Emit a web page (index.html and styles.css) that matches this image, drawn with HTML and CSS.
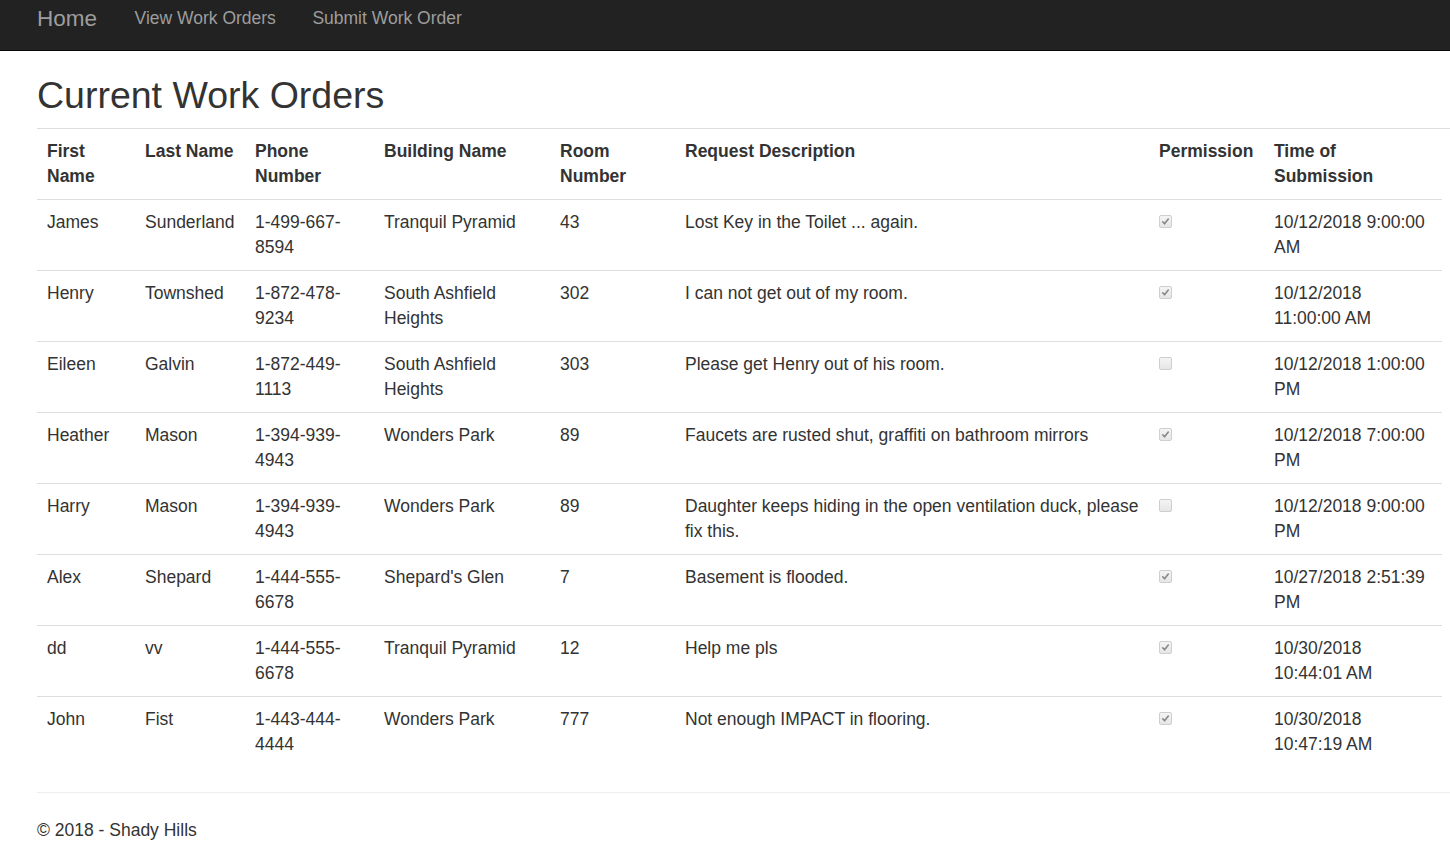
FILE: index.html
```html
<!DOCTYPE html>
<html lang="en">
<head>
<meta charset="utf-8">
<title>Current Work Orders</title>
<link rel="stylesheet" href="styles.css">
</head>
<body>
<header class="navbar">
  <a class="brand" href="#">Home</a>
  <nav class="nav">
    <a href="#">View Work Orders</a>
    <a href="#">Submit Work Order</a>
  </nav>
</header>
<main class="body-content">
  <h2 class="title">Current Work Orders</h2>
  <hr class="rule">
  <table class="table">
    <colgroup>
      <col class="c1"><col class="c2"><col class="c3"><col class="c4"><col class="c5"><col class="c6"><col class="c7"><col class="c8">
    </colgroup>
    <thead>
      <tr><th>First Name</th><th>Last Name</th><th>Phone Number</th><th>Building Name</th><th>Room Number</th><th>Request Description</th><th>Permission</th><th>Time of Submission</th></tr>
    </thead>
    <tbody>
      <tr><td>James</td><td>Sunderland</td><td>1-499-667-8594</td><td>Tranquil Pyramid</td><td>43</td><td>Lost Key in the Toilet ... again.</td><td><span class="check on"><svg viewBox="0 0 13 13"><path d="M3.2 6.8 L5.4 9.2 L9.8 3.6" /></svg></span></td><td>10/12/2018 9:00:00 AM</td></tr>
      <tr><td>Henry</td><td>Townshed</td><td>1-872-478-9234</td><td>South Ashfield Heights</td><td>302</td><td>I can not get out of my room.</td><td><span class="check on"><svg viewBox="0 0 13 13"><path d="M3.2 6.8 L5.4 9.2 L9.8 3.6" /></svg></span></td><td>10/12/2018 11:00:00 AM</td></tr>
      <tr><td>Eileen</td><td>Galvin</td><td>1-872-449-1113</td><td>South Ashfield Heights</td><td>303</td><td>Please get Henry out of his room.</td><td><span class="check"></span></td><td>10/12/2018 1:00:00 PM</td></tr>
      <tr><td>Heather</td><td>Mason</td><td>1-394-939-4943</td><td>Wonders Park</td><td>89</td><td>Faucets are rusted shut, graffiti on bathroom mirrors</td><td><span class="check on"><svg viewBox="0 0 13 13"><path d="M3.2 6.8 L5.4 9.2 L9.8 3.6" /></svg></span></td><td>10/12/2018 7:00:00 PM</td></tr>
      <tr><td>Harry</td><td>Mason</td><td>1-394-939-4943</td><td>Wonders Park</td><td>89</td><td>Daughter keeps hiding in the open ventilation duck, please fix this.</td><td><span class="check"></span></td><td>10/12/2018 9:00:00 PM</td></tr>
      <tr><td>Alex</td><td>Shepard</td><td>1-444-555-6678</td><td>Shepard's Glen</td><td>7</td><td>Basement is flooded.</td><td><span class="check on"><svg viewBox="0 0 13 13"><path d="M3.2 6.8 L5.4 9.2 L9.8 3.6" /></svg></span></td><td>10/27/2018 2:51:39 PM</td></tr>
      <tr><td>dd</td><td>vv</td><td>1-444-555-6678</td><td>Tranquil Pyramid</td><td>12</td><td>Help me pls</td><td><span class="check on"><svg viewBox="0 0 13 13"><path d="M3.2 6.8 L5.4 9.2 L9.8 3.6" /></svg></span></td><td>10/30/2018 10:44:01 AM</td></tr>
      <tr><td>John</td><td>Fist</td><td>1-443-444-4444</td><td>Wonders Park</td><td>777</td><td>Not enough IMPACT in flooring.</td><td><span class="check on"><svg viewBox="0 0 13 13"><path d="M3.2 6.8 L5.4 9.2 L9.8 3.6" /></svg></span></td><td>10/30/2018 10:47:19 AM</td></tr>
    </tbody>
  </table>
  <hr class="rule light">
  <footer class="footer">
    <p>&copy; 2018 - Shady Hills</p>
  </footer>
</main>
</body>
</html>
```

FILE: styles.css
```css
html, body {
  margin: 0;
  padding: 0;
}
body {
  font-family: "Liberation Sans", Arial, Helvetica, sans-serif;
  font-size: 17.5px;
  line-height: 25px;
  color: #333;
  background: #fff;
  overflow: hidden;
}
a {
  text-decoration: none;
}
.navbar {
  height: 50px;
  background: #222;
  border-bottom: 1px solid #080808;
  display: flex;
  align-items: flex-start;
  padding-left: 37px;
}
.brand {
  font-size: 22.5px;
  line-height: 25px;
  padding-top: 6px;
  color: #9d9d9d;
  margin-right: 19px;
}
.nav {
  display: flex;
}
.nav a {
  color: #9d9d9d;
  font-size: 17.5px;
  line-height: 25px;
  padding: 6px 18px 0 18.5px;
}
.body-content {
  padding-left: 37px;
}
.title {
  font-family: "Liberation Sans", Arial, Helvetica, sans-serif;
  font-weight: 400;
  font-size: 37.5px;
  line-height: 41px;
  margin: 24px 0 12px 0;
  color: #333;
}
.rule {
  border: 0;
  border-top: 1px solid #ddd;
  margin: 0;
  height: 0;
}
.rule.light {
  border-top-color: #eee;
}
.table {
  border-collapse: collapse;
  table-layout: fixed;
  width: 1405px;
  margin-bottom: 25px;
}
.c1 { width: 98px; }
.c2 { width: 110px; }
.c3 { width: 129px; }
.c4 { width: 176px; }
.c5 { width: 125px; }
.c6 { width: 474px; }
.c7 { width: 115px; }
.c8 { width: 178px; }
.table th,
.table td {
  padding: 10px;
  text-align: left;
  vertical-align: top;
  line-height: 25px;
}
.table th {
  font-weight: 700;
  border-bottom: 1px solid #ddd;
}
.table tbody tr + tr td {
  border-top: 1px solid #ddd;
}
.check {
  display: block;
  width: 11px;
  height: 11px;
  margin-top: 5px;
  border: 1px solid #cfcfcf;
  border-radius: 2px;
  background: linear-gradient(#f4f4f4, #e6e6e6);
}
.check svg {
  display: block;
  width: 11px;
  height: 11px;
}
.check path {
  fill: none;
  stroke: #888;
  stroke-width: 1.9;
  stroke-linecap: round;
  stroke-linejoin: round;
}
.footer p {
  margin: 25px 0 0 0;
}
```
